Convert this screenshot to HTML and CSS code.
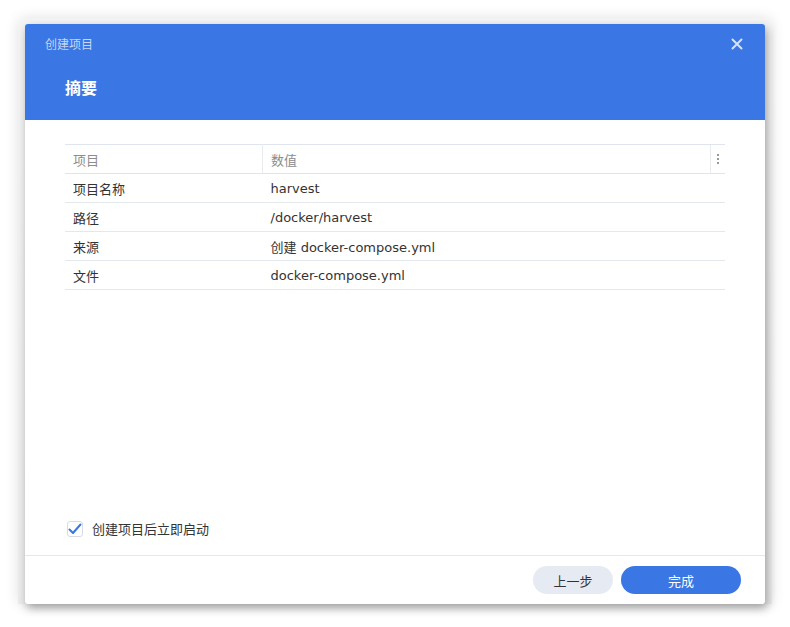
FILE: index.html
```html
<!DOCTYPE html>
<html lang="zh-CN">
<head>
  <meta charset="UTF-8">
  <meta name="viewport" content="width=device-width, initial-scale=1.0">
  <title>创建项目</title>
  <link rel="stylesheet" href="styles.css">
</head>
<body>
  <div class="frame">
    <div class="dialog">
      <div class="header">
        <div class="titlebar">
          <span class="title">创建项目</span>
          <span class="close">
            <svg width="12" height="12" viewBox="0 0 12 12"><path d="M1.5 1.5 L10.5 10.5 M10.5 1.5 L1.5 10.5" stroke="#d6e2fa" stroke-width="2" stroke-linecap="round"/></svg>
          </span>
        </div>
        <h2>摘要</h2>
      </div>

      <div class="body">
        <table class="grid">
          <thead>
            <tr>
              <th class="col-key">项目</th>
              <th class="col-val">数值</th>
              <th class="col-menu"><span class="dots"><i></i><i></i><i></i></span></th>
            </tr>
          </thead>
          <tbody>
            <tr><td>项目名称</td><td colspan="2">harvest</td></tr>
            <tr><td>路径</td><td colspan="2">/docker/harvest</td></tr>
            <tr><td>来源</td><td colspan="2">创建 docker-compose.yml</td></tr>
            <tr><td>文件</td><td colspan="2">docker-compose.yml</td></tr>
          </tbody>
        </table>

        <label class="check">
          <span class="box">
            <svg width="14" height="12" viewBox="0 0 14 12"><path d="M1.5 6.5 L5 10 L12.5 1.5" fill="none" stroke="#3a76e4" stroke-width="2" stroke-linecap="round" stroke-linejoin="round"/></svg>
          </span>
          创建项目后立即启动
        </label>
      </div>

      <div class="footer">
        <button class="btn secondary">上一步</button>
        <button class="btn primary">完成</button>
      </div>
    </div>
  </div>
</body>
</html>
```

FILE: styles.css
```css
html, body {
  margin: 0;
  padding: 0;
  background-color: #ffffff;
}

body {
  font-family: "DejaVu Sans", "Noto Sans CJK SC", sans-serif;
  padding: 18px 18px 23px 18px;
}

.frame {
  width: 754px;
  height: 586px;
  border-radius: 8px 8px 0 0;
  background: linear-gradient(#f4f4f4, #ececec);
  box-shadow: 0 0 14px rgba(0, 0, 0, 0.12);
  padding: 6px 7px 0 7px;
  box-sizing: border-box;
}

.dialog {
  width: 740px;
  height: 580px;
  background-color: #fff;
  border-radius: 3px;
  box-shadow: 2px 4px 10px rgba(0, 0, 0, 0.35);
  display: flex;
  flex-direction: column;
  overflow: hidden;
}

.header {
  background-color: #3a76e4;
  height: 96px;
  box-sizing: border-box;
  padding: 0 20px;
}

.titlebar {
  height: 38px;
  display: flex;
  align-items: center;
  justify-content: space-between;
}

.title {
  color: #c6d6f7;
  font-size: 12px;
}

.close {
  display: flex;
  margin-right: 2px;
  margin-top: 2px;
}

.header h2 {
  margin: 13px 0 0 20px;
  color: #fff;
  font-size: 16px;
  font-weight: bold;
  line-height: 28px;
}

.body {
  flex: 1;
  padding: 24px 40px 0 40px;
  display: flex;
  flex-direction: column;
}

.grid {
  width: 660px;
  border-collapse: collapse;
  font-size: 13px;
  color: #333;
}

.grid th {
  text-align: left;
  font-weight: normal;
  color: #8c8c8c;
  height: 28px;
  padding: 0 8px;
  border-top: 1px solid #dfe4ee;
  border-bottom: 1px solid #dfe4ee;
}

.grid th.col-key {
  width: 181px;
  border-right: 1px solid #e8ebf0;
}

.grid th.col-menu {
  width: 14px;
  padding: 0;
  border-left: 1px solid #e8ebf0;
}

.dots {
  display: flex;
  flex-direction: column;
  align-items: center;
  gap: 2px;
}

.dots i {
  width: 2px;
  height: 2px;
  background-color: #999;
}

.grid td {
  height: 28px;
  padding: 0 8px;
  border-bottom: 1px solid #e3e7ee;
}

.check {
  margin-top: auto;
  margin-bottom: 17px;
  display: flex;
  align-items: center;
  gap: 9px;
  font-size: 13px;
  color: #333;
  padding-left: 2px;
}

.box {
  width: 16px;
  height: 16px;
  border: 1px solid #d6dbe5;
  border-radius: 3px;
  box-sizing: border-box;
  display: flex;
  align-items: center;
  justify-content: center;
}

.footer {
  height: 48px;
  border-top: 1px solid #e3e7ee;
  display: flex;
  align-items: center;
  justify-content: flex-end;
  gap: 8px;
  padding: 0 24px;
}

.btn {
  height: 28px;
  border: none;
  border-radius: 14px;
  font-family: inherit;
  font-size: 13px;
  cursor: pointer;
}

.btn.secondary {
  width: 80px;
  background-color: #e6eaf2;
  color: #333;
}

.btn.primary {
  width: 120px;
  background-color: #3a76e4;
  color: #fff;
}
```
